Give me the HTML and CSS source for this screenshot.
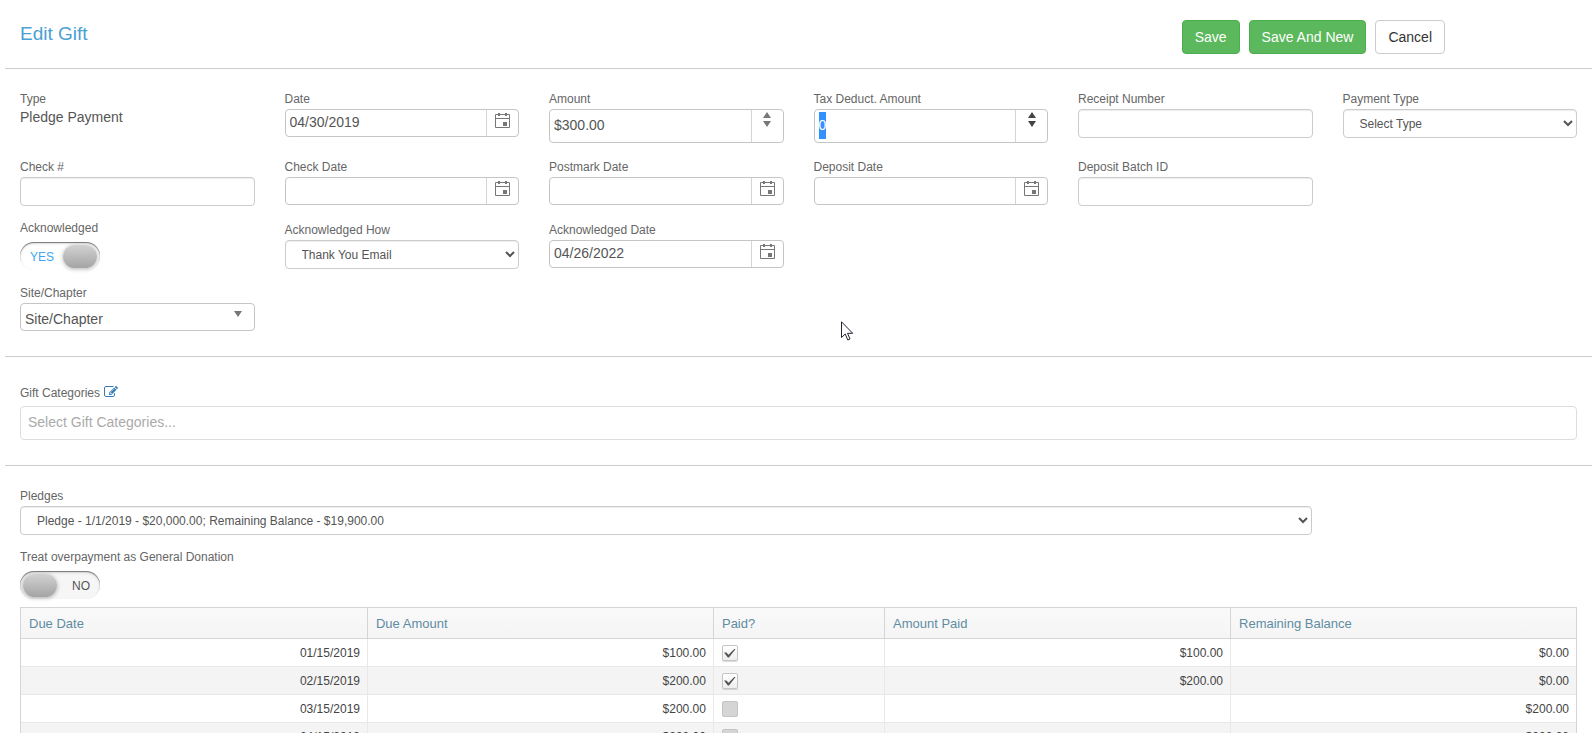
FILE: index.html
```html
<!DOCTYPE html>
<html lang="en">
<head>
  <meta charset="UTF-8">
  <meta name="viewport" content="width=device-width, initial-scale=1.0">
  <title>Edit Gift</title>
  <link rel="stylesheet" href="styles.css">
</head>

<body>
<!-- shared icons -->
<svg class="sprite" aria-hidden="true">
  <symbol id="icon-calendar" viewBox="0 0 15 16">
    <path d="M.5 2.500h14v13H.5zM.5 6.500h14" fill="none" stroke="currentColor"/>
    <path d="M3 1h2v3H3zM10 1h2v3h-2zM8 10h4v4H8z" fill="currentColor"/>
  </symbol>
  <symbol id="icon-spin" viewBox="0 0 8 16">
    <path d="M4 0l4 6H0zM0 9h8l-4 6z" fill="currentColor"/>
  </symbol>
</svg>

<form class="page">
  <header class="header">
    <h1 class="title">Edit Gift</h1>
    <div class="actions">
      <button type="button" class="btn btn-success">Save</button>
      <button type="button" class="btn btn-success">Save And New</button>
      <button type="button" class="btn">Cancel</button>
    </div>
  </header>

  <section class="section fields">
    <div class="field">
      <span class="label">Type</span>
      <div class="value">Pledge Payment</div>
    </div>
    <div class="field">
      <label class="label" for="date">Date</label>
      <div class="picker">
        <input id="date" type="text" value="04/30/2019">
        <button type="button" aria-label="Open calendar"><svg class="cal"><use href="#icon-calendar"/></svg></button>
      </div>
    </div>
    <div class="field">
      <label class="label" for="amount">Amount</label>
      <div class="picker numeric">
        <input id="amount" type="text" value="$300.00">
        <button type="button" aria-label="Change value"><svg class="spin"><use href="#icon-spin"/></svg></button>
      </div>
    </div>
    <div class="field">
      <label class="label" for="tax">Tax Deduct. Amount</label>
      <div class="picker numeric active">
        <input id="tax" type="text" value="0">
        <button type="button" aria-label="Change value"><svg class="spin"><use href="#icon-spin"/></svg></button>
      </div>
    </div>
    <div class="field">
      <label class="label" for="receipt">Receipt Number</label>
      <input class="control" id="receipt" type="text">
    </div>
    <div class="field">
      <label class="label" for="payType">Payment Type</label>
      <select class="control" id="payType"><option>Select Type</option></select>
    </div>

    <div class="field first">
      <label class="label" for="check">Check #</label>
      <input class="control" id="check" type="text">
    </div>
    <div class="field">
      <label class="label" for="checkDate">Check Date</label>
      <div class="picker">
        <input id="checkDate" type="text">
        <button type="button" aria-label="Open calendar"><svg class="cal"><use href="#icon-calendar"/></svg></button>
      </div>
    </div>
    <div class="field">
      <label class="label" for="postmark">Postmark Date</label>
      <div class="picker">
        <input id="postmark" type="text">
        <button type="button" aria-label="Open calendar"><svg class="cal"><use href="#icon-calendar"/></svg></button>
      </div>
    </div>
    <div class="field">
      <label class="label" for="deposit">Deposit Date</label>
      <div class="picker">
        <input id="deposit" type="text">
        <button type="button" aria-label="Open calendar"><svg class="cal"><use href="#icon-calendar"/></svg></button>
      </div>
    </div>
    <div class="field">
      <label class="label" for="batch">Deposit Batch ID</label>
      <input class="control" id="batch" type="text">
    </div>

    <div class="field first">
      <label class="label label-switch" for="ack">Acknowledged</label>
      <div class="switch">
        <input id="ack" type="checkbox" checked>
        <span class="on">YES</span>
        <span class="off">NO</span>
      </div>
    </div>
    <div class="field">
      <label class="label" for="ackHow">Acknowledged How</label>
      <select class="control" id="ackHow"><option>Thank You Email</option></select>
    </div>
    <div class="field">
      <label class="label" for="ackDate">Acknowledged Date</label>
      <div class="picker">
        <input id="ackDate" type="text" value="04/26/2022">
        <button type="button" aria-label="Open calendar"><svg class="cal"><use href="#icon-calendar"/></svg></button>
      </div>
    </div>

    <div class="field first">
      <label class="label" for="site">Site/Chapter</label>
      <div class="dropdown">
        <select id="site"><option>Site/Chapter</option></select>
        <svg class="arrow" viewBox="0 0 8 6"><path d="M0 0h8L4 6z" fill="currentColor"/></svg>
      </div>
    </div>
  </section>

  <section class="section">
    <div class="categories-head">
      <label class="label" for="categories">Gift Categories</label>
      <a href="#categories" aria-label="Edit gift categories"><svg class="edit" viewBox="0 0 1792 1792"><path fill="currentColor" d="M888 1184l116-116-152-152-116 116v56h96v96h56zm440-720q-16-16-33 1l-350 350q-17 17-1 33t33-1l350-350q17-17 1-33zm80 594v190q0 119-84.500 203.500t-203.500 84.500h-832q-119 0-203.500-84.500t-84.500-203.500v-832q0-119 84.500-203.500t203.500-84.500h832q63 0 117 25 15 7 18 23 3 17-9 29l-49 49q-14 14-32 8-23-6-45-6h-832q-66 0-113 47t-47 113v832q0 66 47 113t113 47h832q66 0 113-47t47-113v-126q0-13 9-22l64-64q15-15 35-7t20 29zm-96-738l288 288-672 672h-288v-288zm444 132l-92 92-288-288 92-92q28-28 68-28t68 28l152 152q28 28 28 68t-28 68z"/></svg></a>
    </div>
    <input class="categories" id="categories" type="text" placeholder="Select Gift Categories...">
  </section>

  <section class="section pledges">
    <div class="field pledge-select">
      <label class="label" for="pledge">Pledges</label>
      <select class="control" id="pledge"><option>Pledge - 1/1/2019 - $20,000.00; Remaining Balance - $19,900.00</option></select>
    </div>
    <div class="field">
      <label class="label label-switch" for="over">Treat overpayment as General Donation</label>
      <div class="switch">
        <input id="over" type="checkbox">
        <span class="on">YES</span>
        <span class="off">NO</span>
      </div>
    </div>
    <table class="grid">
      <colgroup><col class="wide"><col class="wide"><col><col class="wide"><col class="wide"></colgroup>
      <thead>
        <tr><th>Due Date</th><th>Due Amount</th><th>Paid?</th><th>Amount Paid</th><th>Remaining Balance</th></tr>
      </thead>
      <tbody>
        <tr><td>01/15/2019</td><td>$100.00</td><td class="paid"><input type="checkbox" aria-label="Paid" checked></td><td>$100.00</td><td>$0.00</td></tr>
        <tr><td>02/15/2019</td><td>$200.00</td><td class="paid"><input type="checkbox" aria-label="Paid" checked></td><td>$200.00</td><td>$0.00</td></tr>
        <tr><td>03/15/2019</td><td>$200.00</td><td class="paid"><input type="checkbox" aria-label="Paid" disabled></td><td></td><td>$200.00</td></tr>
        <tr><td>04/15/2019</td><td>$200.00</td><td class="paid"><input type="checkbox" aria-label="Paid" disabled></td><td></td><td>$200.00</td></tr>
      </tbody>
    </table>
  </section>
</form>

<svg class="cursor" viewBox="0 0 13 20" aria-hidden="true">
  <path d="M.5.8v15.700l3.700-3.500 2.600 6 2.200-1-2.500-5.700h5.200z" fill="#fff" stroke="#223"/>
</svg>

<script>
  // amount is selected so it can be typed over
  document.getElementById('tax').select();
</script>
</body>
</html>
```
FILE: styles.css
```css
* {
  box-sizing: border-box;
}
body {
  margin: 0;
  background: #fff;
  color: #555;
  font-family: "Liberation Sans", Arial, sans-serif;
  font-size: 14px;
}
input, select, button {
  font-family: inherit;
  color: inherit;
  margin: 0;
}
.sprite {
  position: absolute;
  width: 0;
  height: 0;
}
.page {
  margin: 0 2px 0 5px;
}

/* header */
.header {
  display: flex;
  justify-content: space-between;
  align-items: flex-start;
  padding: 20px 147px 14px 15px;
}
.title {
  margin: 0;
  font-size: 19px;
  font-weight: normal;
  line-height: 28px;
  color: #4a9fd4;
}
.actions {
  display: flex;
  gap: 9px;
}
.btn {
  height: 34px;
  padding: 0 12px;
  border: 1px solid #ccc;
  border-radius: 4px;
  background: #fff;
  color: #333;
  font-size: 14px;
}
.btn-success {
  background: #5cb85c;
  border-color: #4cae4c;
  color: #fff;
}

/* fields */
.section {
  border-top: 1px solid #ccc;
  padding: 20px 15px 25px;
}
.fields {
  display: grid;
  grid-template-columns: repeat(6, 1fr);
  align-items: start;
  gap: 14px 30px;
}
.first {
  grid-column-start: 1;
}
.label {
  display: block;
  font-size: 12px;
  line-height: 20px;
  color: #666;
}
.label-switch {
  line-height: 16px;
  margin-bottom: 6px;
}
.value {
  line-height: 16px;
}
.control {
  display: block;
  width: 100%;
  height: 29px;
  padding: 0 12px;
  border: 1px solid #ccc;
  border-radius: 4px;
  background: #fff;
  box-shadow: inset 0 1px 1px rgba(0, 0, 0, .075);
  font-size: 12px;
}
.picker {
  display: flex;
  height: 28px;
  border: 1px solid #c5c5c5;
  border-radius: 4px;
}
.picker input {
  flex: 1;
  min-width: 0;
  padding: 0 4px 2px;
  border: 0;
  outline: 0;
  background: none;
  font-size: 14px;
}
.picker button {
  display: flex;
  justify-content: center;
  width: 32px;
  padding: 2px 0 0;
  border: 0;
  border-left: 1px solid #d5d5d5;
  background: none;
  color: #777;
}
.numeric {
  height: 34px;
}
.numeric input {
  line-height: 27px;
}
.active button {
  color: #444;
}
.picker input::selection {
  background: #3390ff;
  color: #fff;
}
.cal {
  width: 15px;
  height: 16px;
}
.spin {
  width: 8px;
  height: 16px;
}
.dropdown {
  display: grid;
  align-items: center;
  height: 28px;
  border: 1px solid #c5c5c5;
  border-radius: 4px;
}
.dropdown select {
  grid-area: 1 / 1;
  height: 26px;
  padding: 4px 4px 0;
  border: 0;
  background: none;
  appearance: none;
  font-size: 14px;
}
.arrow {
  grid-area: 1 / 1;
  justify-self: end;
  width: 8px;
  height: 6px;
  margin: 0 12px 6px 0;
  color: #777;
  pointer-events: none;
}

/* yes / no switch */
.switch {
  display: grid;
  align-items: center;
  width: 80px;
  height: 28px;
  margin-bottom: -1px;
  font-size: 12px;
}
.switch input,
.switch span {
  grid-area: 1 / 1;
}
.switch input {
  display: flex;
  align-items: center;
  width: 80px;
  height: 28px;
  padding: 0 3px;
  appearance: none;
  border-radius: 14px;
  background: #f6f6f6;
  box-shadow: inset 0 1px 1px #777, inset 0 2px 3px rgba(0, 0, 0, .1);
}
.switch input:checked {
  justify-content: flex-end;
  background: #fff;
}
.switch input::before {
  content: "";
  width: 34px;
  height: 23px;
  border-radius: 12px;
  background: linear-gradient(#d2d2d2, #a4a4a4);
  box-shadow: 0 1px 4px rgba(0, 0, 0, .3);
}
.switch span {
  padding: 2px 10px 0;
  pointer-events: none;
}
.switch .on {
  display: none;
  color: #42a5f5;
}
.switch .off {
  justify-self: end;
}
.switch input:checked ~ .on {
  display: block;
}
.switch input:checked ~ .off {
  display: none;
}

/* gift categories */
.categories-head {
  display: flex;
  align-items: center;
  gap: 4px;
  padding: 6px 0 3px;
}
.categories-head a {
  display: flex;
  padding-bottom: 2px;
  color: #337ab7;
}
.edit {
  width: 14px;
  height: 14px;
}
.categories {
  display: block;
  width: 100%;
  height: 34px;
  padding: 0 7px 2px;
  border: 1px solid #ddd;
  border-radius: 4px;
  font-size: 14px;
}
.categories::placeholder {
  color: #aaa;
}

/* pledges */
.pledge-select {
  width: 83%;
  margin-bottom: 14px;
}
.grid {
  width: 100%;
  margin-top: 9px;
  border: 1px solid #d5d5d5;
  border-collapse: separate;
  border-spacing: 0;
  table-layout: fixed;
  font-size: 12px;
  color: #444;
}
.grid .wide {
  width: 22.25%;
}
.grid th {
  height: 31px;
  padding: 0 8px;
  border-bottom: 1px solid #d5d5d5;
  background: linear-gradient(#f9f9f9, #f5f5f5);
  color: #5f8ca3;
  font-size: 13px;
  font-weight: normal;
  text-align: left;
}
.grid td {
  height: 28px;
  padding: 0 7px 0 8px;
  border-bottom: 1px solid #e8e8e8;
  text-align: right;
}
.grid th + th {
  border-left: 1px solid #d5d5d5;
}
.grid td + td {
  border-left: 1px solid #e8e8e8;
}
.grid tbody tr:nth-child(even) {
  background: #f4f4f4;
}
.grid .paid input {
  display: block;
  width: 16px;
  height: 16px;
  appearance: none;
  border: 1px solid #c5c5c5;
  border-radius: 2px;
  background: linear-gradient(#fff, #eee);
  box-shadow: 0 1px 1px rgba(0, 0, 0, .15);
}
.grid .paid input:disabled {
  background: #d5d5d5;
  box-shadow: none;
}
.grid .paid input:checked::before {
  content: "";
  display: block;
  width: 12px;
  height: 9px;
  margin: 3px 1px;
  background: #555;
  clip-path: polygon(0 45%, 20% 45%, 38% 70%, 90% 0, 100% 0, 42% 100%, 32% 100%);
}

.cursor {
  position: absolute;
  left: 841px;
  top: 321px;
  width: 13px;
  height: 20px;
}
```
